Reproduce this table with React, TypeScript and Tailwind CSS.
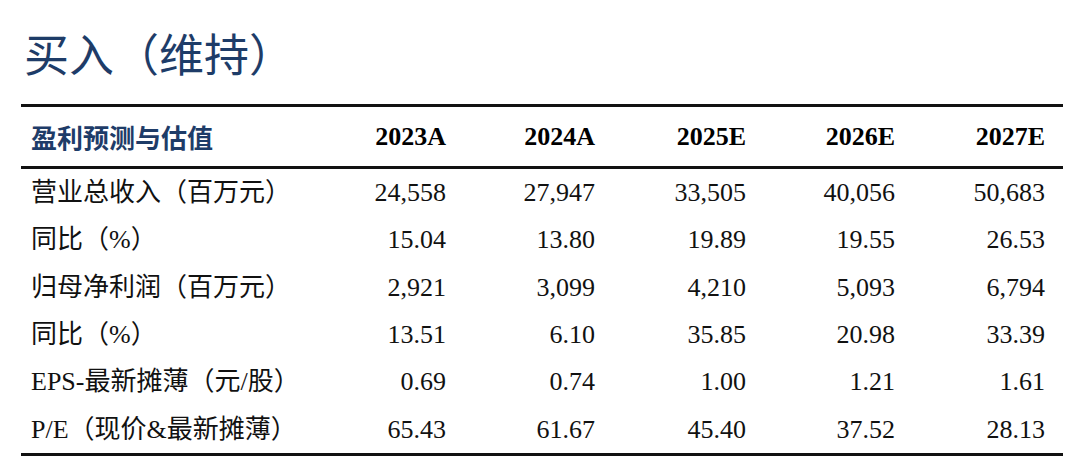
import React from "react";

const serif = { fontFamily: '"Liberation Serif", "Noto Sans CJK SC", serif' };

const years = ["2023A", "2024A", "2025E", "2026E", "2027E"];
const rows: [string, string[]][] = [
  ["营业总收入（百万元）", ["24,558", "27,947", "33,505", "40,056", "50,683"]],
  ["同比（%）", ["15.04", "13.80", "19.89", "19.55", "26.53"]],
  ["归母净利润（百万元）", ["2,921", "3,099", "4,210", "5,093", "6,794"]],
  ["同比（%）", ["13.51", "6.10", "35.85", "20.98", "33.39"]],
  ["EPS-最新摊薄（元/股）", ["0.69", "0.74", "1.00", "1.21", "1.61"]],
  ["P/E（现价&最新摊薄）", ["65.43", "61.67", "45.40", "37.52", "28.13"]],
];

const cols = "grid grid-cols-[265px_150px_149px_151px_149px_150px] pl-[10px] pr-[18px] items-center";

export default function App() {
  return (
    <div className="w-[1080px] h-[476px] bg-white overflow-hidden" style={serif}>
      <div
        className="ml-[24px] mt-[30px] h-[45px] text-[45px] leading-[45px] text-[#1e3c68] whitespace-nowrap"
        style={{ fontFamily: '"Noto Sans CJK SC", serif' }}
      >
        买入（维持）
      </div>
      <div className="ml-[21px] w-[1042px] mt-[29px]">
        <div className="h-[3px] bg-[#111]" />
        <div className={`${cols} h-[59px]`}>
          <div className="text-[26px] font-bold text-[#1e3c68] whitespace-nowrap" style={{ fontFamily: '"Noto Sans CJK SC", serif' }}>
            盈利预测与估值
          </div>
          {years.map((y) => (
            <div key={y} className="text-right text-[26px] font-bold text-black">
              {y}
            </div>
          ))}
        </div>
        <div className="h-[3px] bg-[#111]" />
        {rows.map(([label, vals], i) => (
          <div key={i} className={`${cols} h-[47.3px]`}>
            <div className="text-[26px] text-[#111] whitespace-nowrap">{label}</div>
            {vals.map((v, j) => (
              <div key={j} className="text-right text-[26px] text-[#111]">
                {v}
              </div>
            ))}
          </div>
        ))}
        <div className="h-[3px] bg-[#111]" />
      </div>
    </div>
  );
}
